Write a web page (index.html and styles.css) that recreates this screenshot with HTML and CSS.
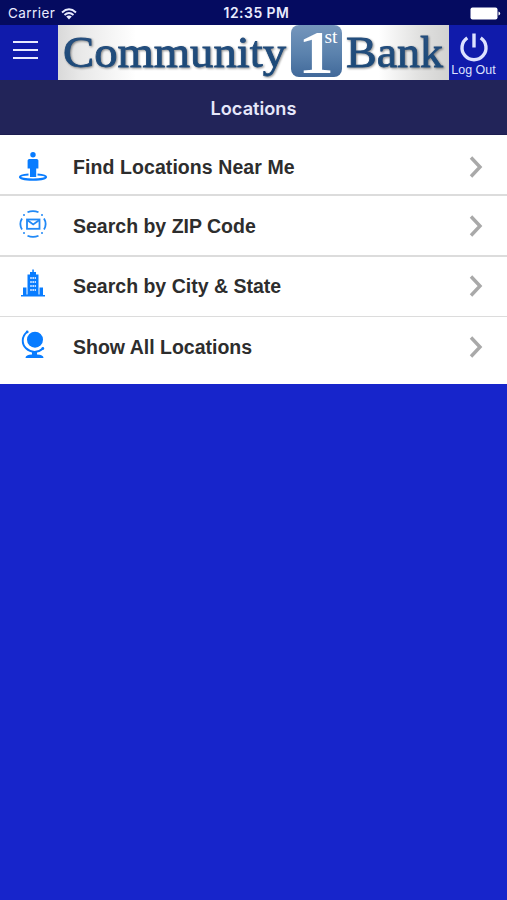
FILE: index.html
```html
<!DOCTYPE html>
<html lang="en">
<head>
<meta charset="utf-8">
<title>Locations</title>
<link rel="stylesheet" href="styles.css">
</head>
<body>
<div class="status">
  <div class="carrier"><span>Carrier</span>
    <svg width="16" height="12" viewBox="0 0 16 12"><g fill="none" stroke="#e9ebff" stroke-width="1.9"><path d="M1 4.5Q8-1.8 15 4.5M3.5 7Q8 3 12.5 7"/></g><path d="M5.2 8.6Q8 6.4 10.800 8.6L8 11.500Z" fill="#e9ebff"/></svg>
  </div>
  <time class="clock">12:35 PM</time>
  <svg class="battery" width="31" height="13" viewBox="0 0 31 13"><rect x=".5" y=".5" width="27" height="12" rx="2" fill="#fff"/><path d="M28.500 4.500Q30.200 5 30.200 6.500T28.500 8.500Z" fill="#fff"/></svg>
</div>
<header class="bar">
  <button class="menu" aria-label="Menu"><i></i><i></i><i></i></button>
  <svg class="logo" width="391" height="55" viewBox="0 0 391 55">
    <defs>
      <linearGradient id="silver"><stop offset="0" stop-color="#d9d9d9"/><stop offset=".06" stop-color="#e9e9e9"/><stop offset=".2" stop-color="#fff"/><stop offset=".82" stop-color="#fff"/><stop offset=".92" stop-color="#e2e2e1"/><stop offset="1" stop-color="#d2d2d1"/></linearGradient>
      <linearGradient id="tile" x2="0" y2="1"><stop offset="0" stop-color="#7596bc"/><stop offset=".55" stop-color="#5b82ad"/><stop offset="1" stop-color="#41699a"/></linearGradient>
      <linearGradient id="ink" x2="0" y2="1"><stop offset="0" stop-color="#2c5384"/><stop offset="1" stop-color="#174775"/></linearGradient>
    </defs>
    <rect width="391" height="55" fill="url(#silver)"/>
    <g class="word" fill="url(#ink)" stroke="#1f4a7a" stroke-width=".8">
      <text x="5" y="42" font-size="43.500" textLength="223" lengthAdjust="spacingAndGlyphs">Community</text>
      <text x="288" y="42" font-size="43.500" textLength="97" lengthAdjust="spacingAndGlyphs">Bank</text>
    </g>
    <rect x="233" y="0" width="51" height="52" rx="8" fill="url(#tile)"/>
    <g class="badge"><text x="240" y="47.500" font-size="62" font-weight="bold" textLength="36" lengthAdjust="spacingAndGlyphs">1</text><text x="266.500" y="18" font-size="18" textLength="13" lengthAdjust="spacingAndGlyphs">st</text></g>
  </svg>
  <button class="logout">
    <svg width="30" height="31" viewBox="0 0 30 31" fill="none" stroke="#dde2ff" stroke-width="3.400"><path d="M8.300 5.800A12 12 0 1 0 21.700 5.800M15 1.500V15.500"/></svg>
    <span>Log Out</span>
  </button>
</header>
<h1 class="title">Locations</h1>
<main class="list">
  <a class="row">
    <svg class="icon" width="30" height="30" viewBox="0 0 30 30"><path d="M10.500 22.500C5 22.800 2 23.700 2 25C2 26.500 7.500 27.600 15 27.600S28 26.500 28 25C28 23.700 25 22.800 19.500 22.500" fill="none" stroke="#087cff" stroke-width="2.200"/><circle cx="15" cy="2.800" r="2.700" fill="#087cff"/><path d="M11.300 7H18.700Q20.400 7 20.400 8.600V16.500H18.200V25H12V16.500H9.600V8.600Q9.600 7 11.300 7Z" fill="#087cff"/></svg>
    <span>Find Locations Near Me</span>
    <svg class="chev" width="14" height="22" viewBox="0 0 14 22"><path d="M2 1.500L11 11L2 20.500"/></svg>
  </a>
  <a class="row">
    <svg class="icon" width="30" height="30" viewBox="0 0 30 30" fill="none" stroke="#2189f6" stroke-width="1.800"><rect x="9" y="10.500" width="12.500" height="9.300"/><path d="M9.500 11.300L15.200 15.500L21 11.300M9.500 3.300Q15 .9 20.500 3.300M9.500 26.700Q15 29.100 20.500 26.700M4 9.500Q.7 15 4 20.500M26 9.500Q29.300 15 26 20.500"/><g fill="#2189f6" stroke="none"><circle cx="6" cy="6" r="1"/><circle cx="24" cy="6" r="1"/><circle cx="6" cy="24" r="1"/><circle cx="24" cy="24" r="1"/></g></svg>
    <span>Search by ZIP Code</span>
    <svg class="chev" width="14" height="22" viewBox="0 0 14 22"><path d="M2 1.500L11 11L2 20.500"/></svg>
  </a>
  <a class="row">
    <svg class="icon" width="30" height="30" viewBox="0 0 30 30"><path d="M3 26H5V18.500H8.500V25.500H9.500V5.500H12V3H14.300V.6H15.800V3H18V5.500H20.500V25.500H21.500V18.500H25V26H27V27.500H3Z" fill="#087cff"/><path d="M12.200 9H18M12.200 13H18M12.200 17H18M12.200 21H18" stroke="#c2ddff" stroke-width="2" stroke-dasharray="1.600 .6"/></svg>
    <span>Search by City &amp; State</span>
    <svg class="chev" width="14" height="22" viewBox="0 0 14 22"><path d="M2 1.500L11 11L2 20.500"/></svg>
  </a>
  <a class="row">
    <svg class="icon" width="30" height="30" viewBox="0 0 30 30"><circle cx="17" cy="9.700" r="8" fill="#087cff"/><path d="M9 2C3.500 6.500 3.500 14 8 18.300C13 23 20 23 25 18.500" fill="none" stroke="#087cff" stroke-width="1.900"/><circle cx="9.200" cy="1.900" r="1.400" fill="#087cff"/><circle cx="24.800" cy="18.500" r="1.400" fill="#087cff"/><path d="M14 21.500H19V24.500Q25.500 24.700 25.500 28H7.500Q7.500 24.700 14 24.500Z" fill="#087cff"/></svg>
    <span>Show All Locations</span>
    <svg class="chev" width="14" height="22" viewBox="0 0 14 22"><path d="M2 1.500L11 11L2 20.500"/></svg>
  </a>
</main>
</body>
</html>
```
FILE: styles.css
```css
* { box-sizing: border-box; }
body { margin: 0; height: 900px; overflow: hidden; background: #1725cb; font-family: "Liberation Sans", Arial, sans-serif; }
svg { display: block; flex: none; }
button { border: 0; padding: 0; background: none; font: inherit; }
.status { height: 25px; padding: 2px 6px 0 8px; display: grid; grid-template-columns: 1fr auto 1fr; align-items: center; background: #050b60; color: #e9ebff; font: 400 13.5px/23px Inter, sans-serif; }
.carrier { display: flex; align-items: center; gap: 6px; letter-spacing: .45px; }
.clock { font-weight: 600; font-size: 13.9px; letter-spacing: .5px; padding-left: 4px; }
.battery { justify-self: end; }
.bar { height: 55px; display: grid; grid-template-columns: 58px 391px 58px; background: #101bab; }
.menu { display: flex; flex-direction: column; gap: 6px; padding: 16px 0 0 13px; }
.menu i { width: 25px; height: 2px; background: #e8ebff; }
.logo { overflow: visible; }
.word, .badge { font-family: "Liberation Serif", serif; }
.word { filter: drop-shadow(1.5px 1.5px 1px rgba(0, 0, 0, .45)); }
.badge { fill: #fff; }
.logout { display: flex; flex-direction: column; align-items: center; padding: 7px 9px 0 0; color: #dde2ff; font-size: 12.5px; line-height: 15px; white-space: nowrap; }
.title { margin: 0; height: 55px; background: #222459; color: #e6e7fa; text-align: center; font: 600 18.2px/56px Inter, sans-serif; border-bottom: 1px solid #1c1d50; }
.list { height: 249px; background: #fff; display: grid; grid-template-rows: 61px 61px 60px 67px; }
.row { display: grid; grid-template-columns: 55px 1fr 14px; align-items: center; padding: 5px 24px 0 18px; border-bottom: 2px solid #dcdcdc; color: #2d2d2d; font-weight: bold; font-size: 19.5px; line-height: 24px; }
.row:first-child { letter-spacing: .08px; }
.row:nth-child(2) { padding-top: 0; }
.row:nth-child(3) { padding: 0 24px 1px 18px; border-bottom-width: 1px; }
.row:last-child { border: 0; padding-bottom: 7px; padding-top: 0; }
.row:nth-child(2) .icon { margin-bottom: 3px; }
.row:nth-child(3) .icon, .row:last-child .icon { margin-bottom: 5px; }
.chev { fill: none; stroke: #a9a9a9; stroke-width: 3.4; }
```
